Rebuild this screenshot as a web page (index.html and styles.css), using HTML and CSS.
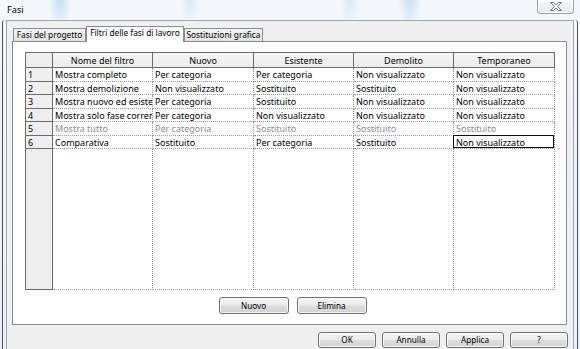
FILE: index.html
```html
<!DOCTYPE html>
<html lang="it">
<head>
<meta charset="utf-8">
<title>Fasi</title>
<link rel="stylesheet" href="styles.css">
</head>
<body>
<div class="window">
  <div class="titlebar">
    <span class="title">Fasi</span>
    <div class="close">
      <svg width="12" height="9" viewBox="0 0 12 9" aria-hidden="true">
        <path d="M0.5 0.5 H3.5 L6 3 L8.5 0.5 H11.5 L7.5 4.5 L11.5 8.5 H8.5 L6 6 L3.5 8.5 H0.5 L4.5 4.5 Z" fill="#ffffff" stroke="#6f7479" stroke-width="1" stroke-linejoin="round"/>
      </svg>
    </div>
  </div>
  <div class="frame">
    <div class="client">
      <div class="tabs">
        <div class="tab t1">Fasi del progetto</div>
        <div class="tab t2 active">Filtri delle fasi di lavoro</div>
        <div class="tab t3">Sostituzioni grafica</div>
      </div>
      <div class="panel">
        <table class="grid">
          <thead>
            <tr>
              <th class="num c0"></th>
              <th class="c1">Nome del filtro</th>
              <th class="c2">Nuovo</th>
              <th class="c3">Esistente</th>
              <th class="c4">Demolito</th>
              <th class="c5">Temporaneo</th>
            </tr>
          </thead>
          <tbody>
            <tr>
              <td class="num">1</td><td>Mostra completo</td><td>Per categoria</td><td>Per categoria</td><td>Non visualizzato</td><td>Non visualizzato</td>
            </tr>
            <tr>
              <td class="num">2</td><td>Mostra demolizione</td><td>Non visualizzato</td><td>Sostituito</td><td>Sostituito</td><td>Non visualizzato</td>
            </tr>
            <tr>
              <td class="num">3</td><td>Mostra nuovo ed esiste</td><td>Per categoria</td><td>Sostituito</td><td>Non visualizzato</td><td>Non visualizzato</td>
            </tr>
            <tr>
              <td class="num">4</td><td>Mostra solo fase corren</td><td>Per categoria</td><td>Non visualizzato</td><td>Non visualizzato</td><td>Non visualizzato</td>
            </tr>
            <tr class="disabled">
              <td class="num">5</td><td>Mostra tutto</td><td>Per categoria</td><td>Sostituito</td><td>Sostituito</td><td>Sostituito</td>
            </tr>
            <tr>
              <td class="num">6</td><td>Comparativa</td><td>Sostituito</td><td>Per categoria</td><td>Sostituito</td><td class="current">Non visualizzato</td>
            </tr>
            <tr class="filler">
              <td class="num"></td><td></td><td></td><td></td><td></td><td></td>
            </tr>
          </tbody>
        </table>
        <div class="panel-buttons">
          <button class="btn wide">Nuovo</button>
          <button class="btn wide">Elimina</button>
        </div>
      </div>
      <div class="footer">
        <button class="btn">OK</button>
        <button class="btn">Annulla</button>
        <button class="btn">Applica</button>
        <button class="btn">?</button>
      </div>
    </div>
  </div>
</div>
</body>
</html>
```
FILE: styles.css
```css
* { box-sizing: border-box; }

html, body {
  margin: 0;
  padding: 0;
}

body {
  width: 580px;
  height: 349px;
  overflow: hidden;
  font-family: "Noto Sans", "Open Sans", sans-serif;
  color: #000;
  background: #e4ecf4;
}

.window {
  width: 580px;
  height: 349px;
  display: flex;
  flex-direction: column;
  background:
    radial-gradient(ellipse 12px 30px at 60px 0, rgba(160, 205, 240, 0.55), rgba(160, 205, 240, 0) 100%),
    radial-gradient(ellipse 10px 26px at 190px 0, rgba(170, 210, 240, 0.35), rgba(170, 210, 240, 0) 100%),
    radial-gradient(ellipse 10px 28px at 350px 0, rgba(170, 210, 240, 0.35), rgba(170, 210, 240, 0) 100%),
    radial-gradient(ellipse 12px 30px at 410px 0, rgba(160, 205, 240, 0.5), rgba(160, 205, 240, 0) 100%),
    linear-gradient(#f4f7fb, #e9f0f7);
}

.titlebar {
  height: 20px;
  flex: none;
  display: flex;
  align-items: flex-start;
  justify-content: space-between;
  padding: 0 6px 0 7px;
}

.title {
  font-size: 9.2px;
  line-height: 12px;
  padding-top: 4px;
  color: #000;
}

.close {
  width: 37px;
  height: 14px;
  border: 1px solid #9aa0a6;
  border-top: none;
  border-radius: 0 0 4px 4px;
  background: linear-gradient(#f7f9fb, #e3e8ed);
  box-shadow: inset 0 0 0 1px rgba(255, 255, 255, 0.8);
  display: flex;
  align-items: center;
  justify-content: center;
}

.close svg { display: block; }

.frame {
  flex: 1;
  display: flex;
  margin: 0 2px;
  padding: 0 3px;
  border-left: 1px solid #4a5158;
  border-right: 1px solid #4a5158;
  border-top-left-radius: 3px;
  border-top-right-radius: 3px;
  min-height: 0;
}

.client {
  flex: 1;
  display: flex;
  flex-direction: column;
  background: #f0f0f0;
  border: 1px solid #a3a8ad;
  border-bottom: none;
  padding: 5px 5px 0 5px;
  min-height: 0;
}

/* tabs */
.tabs {
  display: flex;
  align-items: flex-end;
  height: 16px;
  margin: 0 0 -1px 0;
  padding-left: 1px;
  position: relative;
  z-index: 1;
}

.tab {
  height: 14px;
  border: 1px solid #898c95;
  border-left: none;
  background: linear-gradient(#f3f3f3, #e4e4e4);
  font-size: 8.3px;
  line-height: 12px;
  text-align: center;
  white-space: nowrap;
  color: #000;
}

.t1 { width: 73px; border-left: 1px solid #898c95; }
.t2 { width: 98px; }
.t3 { width: 79px; border-left: 1px solid #898c95; }

.tab.active {
  height: 16px;
  background: #ffffff;
  border-left: 1px solid #898c95;
  border-bottom: none;
  line-height: 11px;
  padding-top: 0;
}

/* panel */
.panel {
  flex: none;
  margin-right: 1px;
  height: 284px;
  border: 1px solid #898c95;
  background: #ffffff;
  padding: 10px 11px 10px 12px;
  display: flex;
  flex-direction: column;
}

/* grid */
.grid {
  width: 530px;
  table-layout: fixed;
  border-collapse: separate;
  border-spacing: 0;
  font-size: 9px;
  line-height: 11px;
}

.grid th,
.grid td {
  padding: 0 0 0 2px;
  white-space: nowrap;
  overflow: hidden;
  text-overflow: clip;
  vertical-align: middle;
}

.grid th {
  height: 16px;
  font-weight: normal;
  text-align: center;
  padding: 0;
  background: linear-gradient(#f6f6f6, #ececec);
  border-top: 1px solid #6c6c6c;
  border-right: 1px solid #6c6c6c;
  border-bottom: 1px solid #6c6c6c;
}

.grid th.num {
  border-left: 1px solid #6c6c6c;
  background: #efefef;
}

.c0 { width: 28px; }
.c1 { width: 100px; }
.c2 { width: 101px; }
.c3 { width: 100px; }
.c4 { width: 100px; }
.c5 { width: 101px; }

.grid tbody tr { height: 14px; }
.grid tbody tr:nth-child(even) { height: 13px; }
.grid tbody tr.filler { height: 141px; }

.grid td {
  text-align: left;
  border-right: 1px dotted #9c9c9c;
  border-bottom: 1px dotted #9c9c9c;
}

.grid td.num {
  background: #efefef;
  border-left: 1px solid #6c6c6c;
  border-right: 1px solid #6c6c6c;
  border-bottom: 1px solid #6c6c6c;
  padding-left: 2px;
}

.grid tr.disabled td { color: #8d8d8d; }
.grid tr.disabled td.num { color: #000; }

.grid td.current {
  position: relative;
  overflow: visible;
}

.grid td.current::after {
  content: "";
  position: absolute;
  top: -1px;
  left: -1px;
  right: 0;
  bottom: 0;
  border: 1px solid #111;
  pointer-events: none;
}

/* buttons */
.btn {
  height: 16px;
  width: 58px;
  margin: 0;
  padding: 0;
  border: 1px solid #707070;
  border-radius: 3px;
  background: linear-gradient(#f4f4f4 0%, #ececec 48%, #dedede 52%, #d2d2d2 100%);
  box-shadow: inset 0 0 0 1px rgba(255, 255, 255, 0.75);
  font-family: "Noto Sans", "Open Sans", sans-serif;
  font-size: 8.2px;
  line-height: 12px;
  color: #000;
  text-align: center;
}

.btn.wide {
  width: 70px;
  height: 17px;
}

.panel-buttons {
  display: flex;
  justify-content: center;
  gap: 8px;
  margin-top: 7px;
  padding-left: 5px;
}

.footer {
  display: flex;
  justify-content: flex-end;
  gap: 6px;
  margin-top: 7px;
  padding-right: 0;
}
```
